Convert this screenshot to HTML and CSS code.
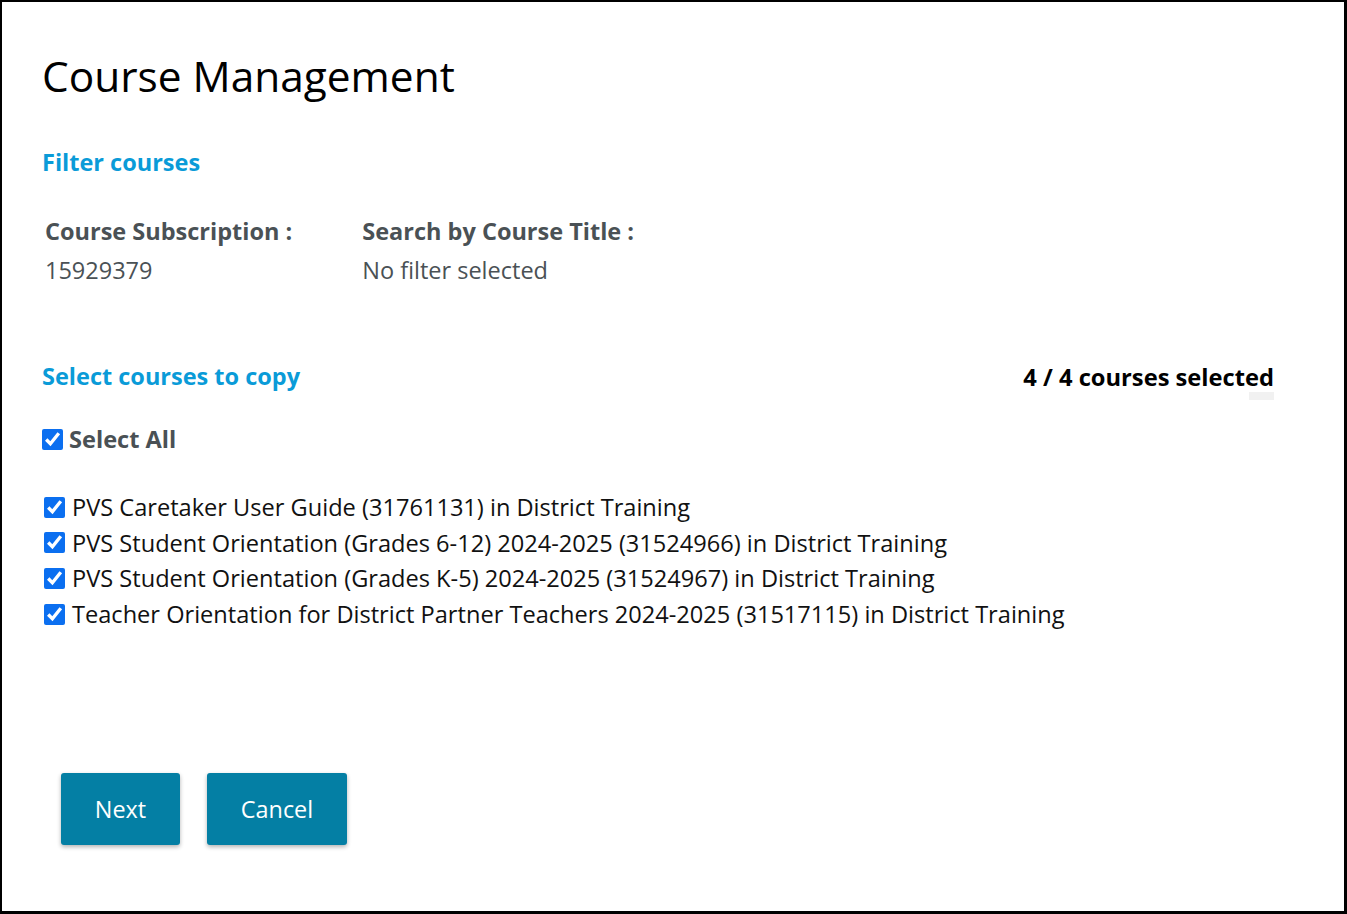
FILE: index.html
```html
<!DOCTYPE html>
<html>
<head>
<meta charset="utf-8">
<link rel="stylesheet" href="styles.css">
</head>
<body>
<div class="frame">
  <h1 class="title">Course Management</h1>
  <h2 class="section-title">Filter courses</h2>
  <div class="filters">
    <div class="filter">
      <div class="filter-label">Course Subscription :</div>
      <div class="filter-value">15929379</div>
    </div>
    <div class="filter">
      <div class="filter-label">Search by Course Title :</div>
      <div class="filter-value">No filter selected</div>
    </div>
  </div>
  <div class="select-head">
    <h2 class="section-title">Select courses to copy</h2>
    <div class="count">4 / 4 courses selected<span class="count-mark"></span></div>
  </div>
  <label class="select-all"><input type="checkbox" checked> Select All</label>
  <ul class="courses">
    <li><label><input type="checkbox" checked> PVS Caretaker User Guide (31761131) in District Training</label></li>
    <li><label><input type="checkbox" checked> PVS Student Orientation (Grades 6-12) 2024-2025 (31524966) in District Training</label></li>
    <li><label><input type="checkbox" checked> PVS Student Orientation (Grades K-5) 2024-2025 (31524967) in District Training</label></li>
    <li><label><input type="checkbox" checked> Teacher Orientation for District Partner Teachers 2024-2025 (31517115) in District Training</label></li>
  </ul>
  <div class="actions">
    <button class="btn btn-next">Next</button>
    <button class="btn btn-cancel">Cancel</button>
  </div>
</div>
</body>
</html>
```
FILE: styles.css
```css
* { box-sizing: border-box; }
html, body { margin: 0; padding: 0; background: #fff; }
body { font-family: "Open Sans", "Liberation Sans", sans-serif; color: #111; }
.frame {
  width: 1347px;
  height: 914px;
  border: 2px solid #000;
  border-right-width: 3px;
  border-bottom-width: 3px;
  padding: 0 70px 0 40px;
}
.title {
  margin: 45px 0 0 0;
  font-size: 42.4px;
  font-weight: 400;
  line-height: 58px;
  color: #000;
}
.section-title {
  margin: 0;
  font-size: 23.5px;
  font-weight: 700;
  color: #0a9bd8;
  line-height: 32px;
}
.title + .section-title { margin-top: 41px; }
.filters {
  display: flex;
  gap: 70px;
  margin-top: 37px;
  padding-left: 3px;
}
.filter-label {
  font-size: 23.5px;
  font-weight: 700;
  color: #4a5155;
  line-height: 32px;
}
.filter-value {
  font-size: 23.5px;
  color: #4a5155;
  line-height: 32px;
  margin-top: 7px;
}
.select-head {
  display: flex;
  justify-content: space-between;
  align-items: flex-start;
  margin-top: 74px;
}
.count {
  position: relative;
  font-size: 23.7px;
  font-weight: 700;
  color: #000;
  line-height: 32px;
  margin-top: 1px;
}
.count-mark {
  position: absolute;
  right: 0;
  top: 31px;
  width: 25px;
  height: 8px;
  background: #f1f1f1;
}
.select-all {
  display: flex;
  align-items: center;
  gap: 6px;
  margin-top: 30px;
  font-size: 23.6px;
  font-weight: 700;
  color: #4a5155;
  line-height: 32px;
}
input[type="checkbox"] {
  width: 21px;
  height: 21px;
  margin: 0;
  accent-color: #0b6ff0;
}
.courses {
  list-style: none;
  margin: 36px 0 0 0;
  padding: 0;
}
.courses li {
  height: 35.7px;
}
.courses label {
  display: flex;
  align-items: center;
  gap: 7px;
  padding-left: 2px;
  font-size: 23.6px;
  line-height: 32px;
  color: #111;
}
.actions {
  display: flex;
  gap: 27px;
  margin-top: 139px;
  padding-left: 19px;
}
.btn {
  height: 72px;
  border: none;
  border-radius: 3px;
  background: #047fa4;
  color: #fff;
  font-family: "Open Sans", "Liberation Sans", sans-serif;
  font-size: 23.4px;
  box-shadow: 0 2px 4px rgba(0,0,0,0.3);
}
.btn-next { width: 119px; }
.btn-cancel { width: 140px; }
```
